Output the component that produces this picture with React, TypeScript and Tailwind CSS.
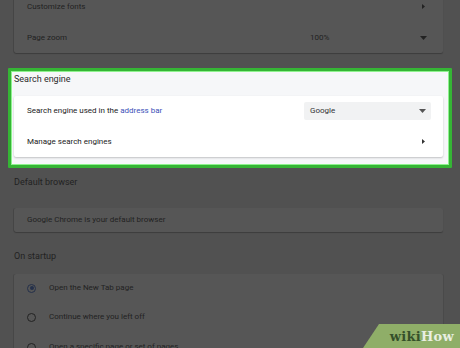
import React from 'react';

const font = { fontFamily: 'Roboto, "Noto Sans", Arial, sans-serif' };

function Caret() {
    return (
        <svg width="7" height="4" viewBox="0 0 7 4" className="shrink-0">
            <path d="M0 0 L7 0 L3.5 4 Z" fill="currentColor" />
        </svg>
    );
}

function Arrow() {
    return (
        <svg width="3" height="5" viewBox="0 0 3 5" className="shrink-0">
            <path d="M0 0 L3 2.5 L0 5 Z" fill="currentColor" />
        </svg>
    );
}

function Radio({ checked }: { checked?: boolean }) {
    return (
        <span
            className={`flex h-[9px] w-[9px] items-center justify-center rounded-full border-[1.5px] ${checked ? 'border-[#24304a]' : 'border-[#222]'}`}
        >
            {checked && <span className="h-[4px] w-[4px] rounded-full bg-[#24304a]" />}
        </span>
    );
}

export default function App() {
    return (
        <div className="relative h-[348px] w-[460px] overflow-hidden bg-[#515151] text-[#222]" style={font}>
            <div className="pl-[14px] pr-[17px]">
                {/* Appearance card (dimmed) */}
                <div className="-mt-[9px] rounded-b-[2px] bg-[#565656] shadow-[0_1px_1px_rgba(0,0,0,0.25),-1px_0_0_rgba(0,0,0,0.12)]">
                    <div className="flex h-[31px] items-center justify-between pl-[13px] pr-[18px] text-[8px]">
                        <span>Customize fonts</span>
                        <Arrow />
                    </div>
                    <div className="flex h-[31px] items-center pl-[13px] pr-[12px] text-[8px]">
                        <span className="flex-1">Page zoom</span>
                        <span className="flex w-[127px] items-center justify-between pl-[6px] pr-[4px]">
                            <span>100%</span>
                            <Caret />
                        </span>
                    </div>
                </div>

                {/* Highlighted search engine section */}
                <div className="-ml-[6px] -mr-[9px] mt-[15px] rounded-[1px] border-[3px] border-[#35b535] bg-[#f6f7f9] pb-[8px] pl-[3px] pr-[6px] shadow-[inset_0_0_0_1px_#8ef28e]">
                    <div className="h-[25px] pt-[3px] text-[9px] leading-[11px] text-[#2b2b2b]">Search engine</div>
                    <div className="rounded-[2px] bg-white text-[8px] text-[#222] shadow-[0_1px_2px_rgba(0,0,0,0.22)]">
                        <div className="flex h-[30px] items-center pl-[13px] pr-[12px]">
                            <span className="flex-1">
                                Search engine used in the <span className="text-[#3b4fb8]">address bar</span>
                            </span>
                            <span className="flex h-[18px] w-[127px] items-center justify-between rounded-[2px] bg-[#f1f2f3] pl-[6px] pr-[5px] text-[#333]">
                                <span>Google</span>
                                <span className="text-[#555]">
                                    <Caret />
                                </span>
                            </span>
                        </div>
                        <div className="flex h-[31px] items-center justify-between pl-[13px] pr-[18px]">
                            <span>Manage search engines</span>
                            <span className="text-[#333]">
                                <Arrow />
                            </span>
                        </div>
                    </div>
                </div>

                {/* Default browser (dimmed) */}
                <div className="flex h-[30px] items-center text-[9px]">Default browser</div>
                <div className="mt-[10px] flex h-[24px] items-center rounded-[2px] bg-[#565656] pl-[13px] text-[8px] shadow-[0_1px_1px_rgba(0,0,0,0.25),-1px_0_0_rgba(0,0,0,0.12)]">
                    Google Chrome is your default browser
                </div>

                {/* On startup (dimmed) */}
                <div className="mt-[12px] flex h-[26px] items-center text-[9px]">On startup</div>
                <div className="mt-[4px] rounded-t-[2px] bg-[#565656] text-[8px] shadow-[-1px_0_0_rgba(0,0,0,0.12),1px_0_0_rgba(0,0,0,0.08)]">
                    <div className="flex h-[28px] items-center gap-[13px] pl-[13px]">
                        <Radio checked />
                        <span>Open the New Tab page</span>
                    </div>
                    <div className="flex h-[30px] items-center gap-[13px] pl-[13px]">
                        <Radio />
                        <span>Continue where you left off</span>
                    </div>
                    <div className="flex h-[30px] items-center gap-[13px] pl-[13px]">
                        <Radio />
                        <span>Open a specific page or set of pages</span>
                    </div>
                </div>
            </div>

            {/* wikiHow badge */}
            <div className="absolute bottom-0 right-0 flex h-[24px] w-[97px] items-center justify-end bg-[#8fae68] pr-[6px] [clip-path:polygon(16px_0,100%_0,100%_100%,0_100%)]">
                <span className="text-[13px] font-bold leading-none tracking-[0.3px]" style={{ fontFamily: '"DejaVu Serif", "Liberation Serif", serif' }}>
                    <span className="text-[#35502a]">wiki</span>
                    <span className="text-[#e9efe2]">How</span>
                </span>
            </div>
        </div>
    );
}
